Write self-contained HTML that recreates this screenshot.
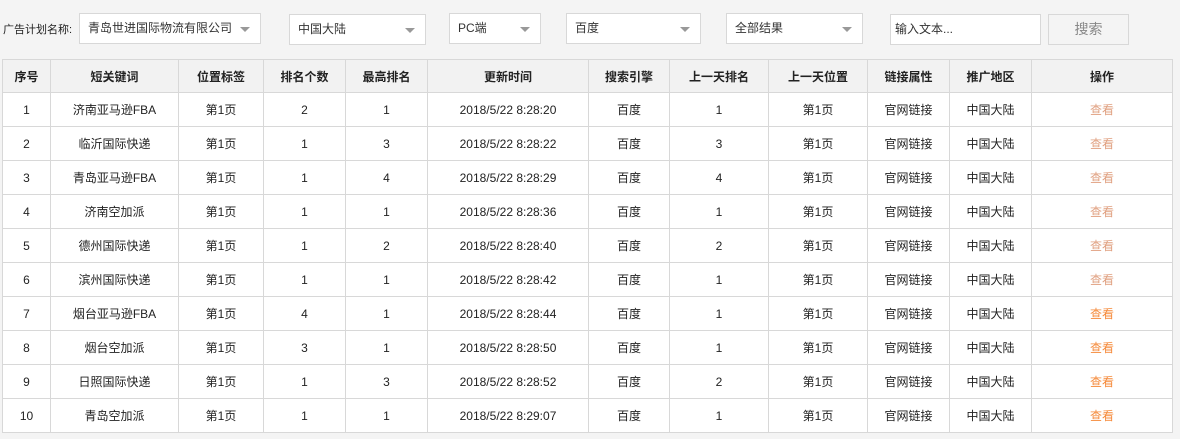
<!DOCTYPE html>
<html><head><meta charset="utf-8"><style>
body{margin:0;width:1180px;height:439px;background:#f4f4f4;font-family:"Liberation Sans","Noto Sans CJK SC",sans-serif;font-size:12px;color:#222;position:relative;overflow:hidden}
.a{position:absolute}
.box{position:absolute;background:#fff;border:1px solid #d8d8d8;box-sizing:border-box;height:31px;line-height:29px;padding-left:8px;color:#333}
.sel:after{content:"";position:absolute;right:10px;top:13px;border-left:5px solid transparent;border-right:5px solid transparent;border-top:5px solid #999}
table{position:absolute;left:2px;top:59px;border-collapse:collapse;background:#fff;table-layout:fixed}
td,th{border:1px solid #d8d8d8;text-align:center;height:33px;padding:0;font-size:12px}
th{background:#f2f2f2;font-weight:bold;height:32px}
.l{color:#e0a080}.o{color:#f58a3a}
</style></head><body>
<div class="a" style="left:3px;top:22px;line-height:16px;font-size:11px">广告计划名称:</div>
<div class="box sel" style="left:79px;top:13px;width:182px">青岛世进国际物流有限公司</div>
<div class="box sel" style="left:289px;top:14px;width:137px">中国大陆</div>
<div class="box sel" style="left:449px;top:13px;width:92px">PC端</div>
<div class="box sel" style="left:566px;top:13px;width:135px">百度</div>
<div class="box sel" style="left:726px;top:13px;width:137px">全部结果</div>
<div class="box" style="left:890px;top:14px;width:151px;padding-left:4px">输入文本...</div>
<div class="box" style="left:1048px;top:14px;width:81px;padding:0;text-align:center;background:#f4f4f4;color:#888;font-size:14px">搜索</div>
<table>
<colgroup><col style="width:48px"><col style="width:128px"><col style="width:85px"><col style="width:82px"><col style="width:82px"><col style="width:161px"><col style="width:81px"><col style="width:99px"><col style="width:99px"><col style="width:82px"><col style="width:82px"><col style="width:141px"></colgroup>
<tr><th>序号</th><th>短关键词</th><th>位置标签</th><th>排名个数</th><th>最高排名</th><th>更新时间</th><th>搜索引擎</th><th>上一天排名</th><th>上一天位置</th><th>链接属性</th><th>推广地区</th><th>操作</th></tr>
<tr><td>1</td><td>济南亚马逊FBA</td><td>第1页</td><td>2</td><td>1</td><td>2018/5/22 8:28:20</td><td>百度</td><td>1</td><td>第1页</td><td>官网链接</td><td>中国大陆</td><td class="l">查看</td></tr>
<tr><td>2</td><td>临沂国际快递</td><td>第1页</td><td>1</td><td>3</td><td>2018/5/22 8:28:22</td><td>百度</td><td>3</td><td>第1页</td><td>官网链接</td><td>中国大陆</td><td class="l">查看</td></tr>
<tr><td>3</td><td>青岛亚马逊FBA</td><td>第1页</td><td>1</td><td>4</td><td>2018/5/22 8:28:29</td><td>百度</td><td>4</td><td>第1页</td><td>官网链接</td><td>中国大陆</td><td class="l">查看</td></tr>
<tr><td>4</td><td>济南空加派</td><td>第1页</td><td>1</td><td>1</td><td>2018/5/22 8:28:36</td><td>百度</td><td>1</td><td>第1页</td><td>官网链接</td><td>中国大陆</td><td class="l">查看</td></tr>
<tr><td>5</td><td>德州国际快递</td><td>第1页</td><td>1</td><td>2</td><td>2018/5/22 8:28:40</td><td>百度</td><td>2</td><td>第1页</td><td>官网链接</td><td>中国大陆</td><td class="l">查看</td></tr>
<tr><td>6</td><td>滨州国际快递</td><td>第1页</td><td>1</td><td>1</td><td>2018/5/22 8:28:42</td><td>百度</td><td>1</td><td>第1页</td><td>官网链接</td><td>中国大陆</td><td class="l">查看</td></tr>
<tr><td>7</td><td>烟台亚马逊FBA</td><td>第1页</td><td>4</td><td>1</td><td>2018/5/22 8:28:44</td><td>百度</td><td>1</td><td>第1页</td><td>官网链接</td><td>中国大陆</td><td class="o">查看</td></tr>
<tr><td>8</td><td>烟台空加派</td><td>第1页</td><td>3</td><td>1</td><td>2018/5/22 8:28:50</td><td>百度</td><td>1</td><td>第1页</td><td>官网链接</td><td>中国大陆</td><td class="o">查看</td></tr>
<tr><td>9</td><td>日照国际快递</td><td>第1页</td><td>1</td><td>3</td><td>2018/5/22 8:28:52</td><td>百度</td><td>2</td><td>第1页</td><td>官网链接</td><td>中国大陆</td><td class="o">查看</td></tr>
<tr><td>10</td><td>青岛空加派</td><td>第1页</td><td>1</td><td>1</td><td>2018/5/22 8:29:07</td><td>百度</td><td>1</td><td>第1页</td><td>官网链接</td><td>中国大陆</td><td class="o">查看</td></tr>
</table>
</body></html>
